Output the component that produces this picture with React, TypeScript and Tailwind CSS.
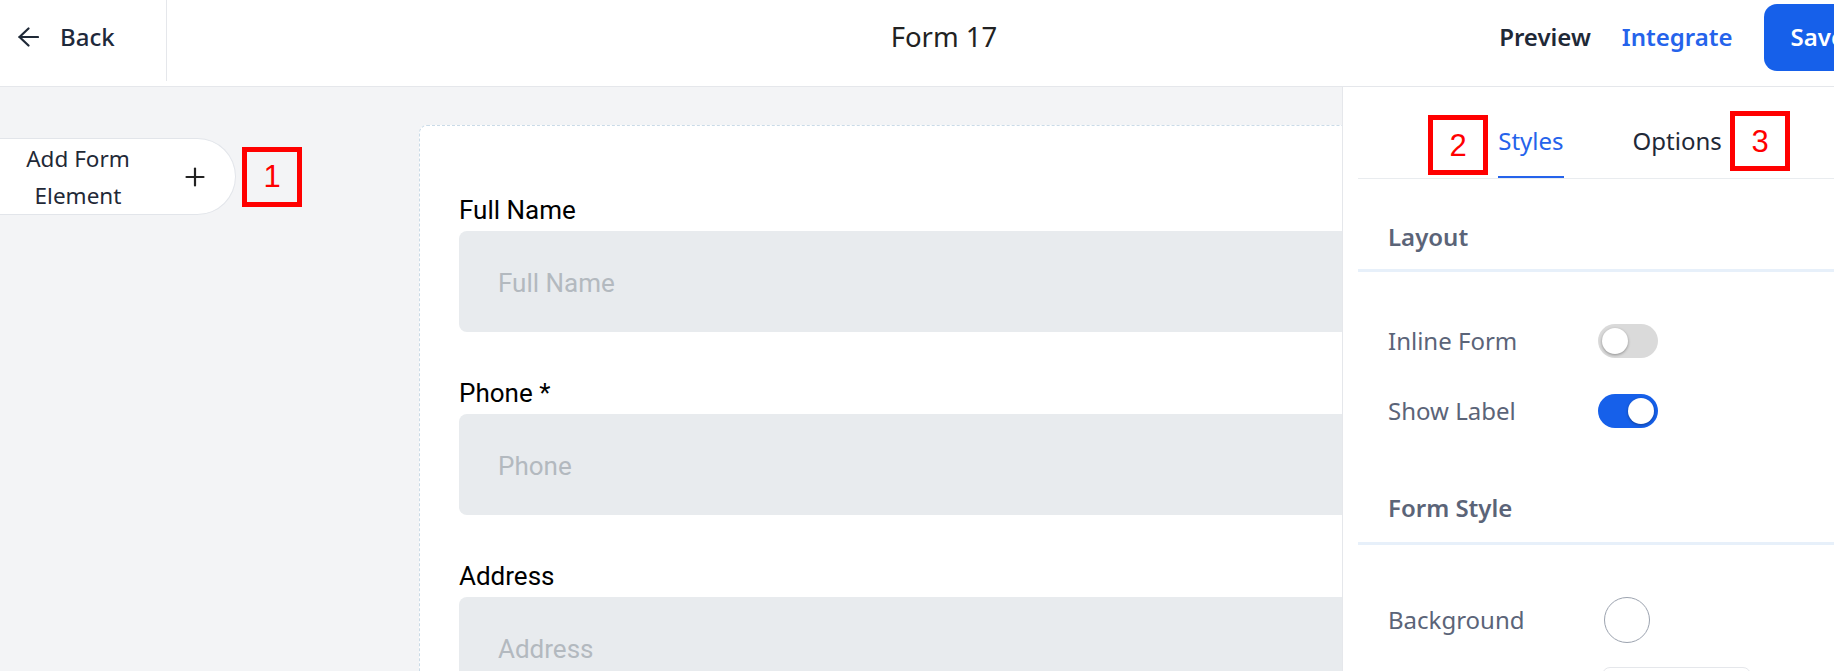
import React from "react";

function Toggle({ on }: { on: boolean }) {
  return (
    <div
      className={
        on
          ? "flex h-[34px] w-[60px] items-center justify-end rounded-full bg-[#1660ea] px-[4px]"
          : "flex h-[34px] w-[60px] items-center justify-start rounded-full bg-[#dadada] px-[4px]"
      }
    >
      <div className="h-[26px] w-[26px] rounded-full bg-white shadow-[0_1px_3px_rgba(0,0,0,0.35)]" />
    </div>
  );
}

function RedBox({ n }: { n: string }) {
  return (
    <div className="flex h-[60px] w-[60px] items-center justify-center border-[5px] border-[#ff0000] font-['Liberation_Sans',Arial,sans-serif] text-[31px] leading-none text-[#ff0000]">
      {n}
    </div>
  );
}

function Field({ label, placeholder }: { label: string; placeholder: string }) {
  return (
    <div className="flex flex-col">
      <label className="mb-[5px] font-['Roboto',sans-serif] text-[26px] leading-[31px] text-black">{label}</label>
      <input
        readOnly
        placeholder={placeholder}
        className="h-[101px] w-full rounded-lg border-0 bg-[#e8ebee] pl-[39px] pt-[3px] font-['Roboto',sans-serif] text-[26px] text-black outline-none placeholder:text-[#b3b9bf]"
      />
    </div>
  );
}

export default function App() {
  return (
    <div className="h-[671px] w-[1834px] overflow-hidden bg-white font-['Noto_Sans',sans-serif]">
      <div className="flex h-full w-[1888px] flex-col">
        {/* Header */}
        <header className="grid h-[87px] shrink-0 grid-cols-[1fr_auto_1fr] items-start border-b border-[#e5e7eb] bg-white">
          <div className="flex">
            <div className="flex h-[81px] w-[167px] items-center border-r border-[#e5e7eb] pb-[7px] pl-[18px]">
              <svg width="21" height="20" viewBox="0 0 21 20" fill="none" stroke="#1f2937" strokeWidth="2.2" strokeLinecap="round" strokeLinejoin="round">
                <path d="M20 10H1.5" />
                <path d="M10.5 1.5L1.5 10L10.5 18.5" />
              </svg>
              <span className="ml-[21px] text-[24px] font-medium leading-none text-[#1e293b]">Back</span>
            </div>
          </div>
          <div className="flex h-[74px] items-center">
            <h1 className="text-[27.5px] font-normal leading-none text-[#222222]">Form 17</h1>
          </div>
          <div className="flex h-[74px] items-center justify-end gap-[31px] pr-[16px]">
            <span className="text-[24px] font-semibold leading-none text-[#1f2937]">Preview</span>
            <span className="text-[24px] font-semibold leading-none text-[#2563eb]">Integrate</span>
            <button className="h-[67px] rounded-[13px] bg-[#1660ea] px-[27px] text-[24px] font-semibold text-white">Save</button>
          </div>
        </header>

        {/* Body */}
        <div className="flex min-h-0 flex-1">
          {/* Canvas */}
          <div className="flex w-[1342px] shrink-0 items-start overflow-hidden bg-[#f3f4f6]">
            <div className="flex w-[419px] shrink-0 items-center pt-[51px]">
              <div className="flex h-[77px] w-[236px] items-center rounded-r-full border border-l-0 border-[#e2e5ea] bg-white pl-[26px]">
                <div className="w-[104px] text-center text-[22.5px] leading-[37px] text-[#1f2937]">
                  Add Form Element
                </div>
                <svg className="ml-[55px]" width="20" height="20" viewBox="0 0 20 20" fill="none" stroke="#222222" strokeWidth="2.2" strokeLinecap="round">
                  <path d="M10 1.5V18.5" />
                  <path d="M1.5 10H18.5" />
                </svg>
              </div>
              <div className="ml-[6px]">
                <RedBox n="1" />
              </div>
            </div>

            <div className="mt-[38px] w-[1100px] shrink-0 rounded-lg border border-dashed border-[#cadbe8] bg-white px-[39px] pb-[40px] pt-[69px]">
              <div className="flex flex-col gap-[46px]">
                <Field label="Full Name" placeholder="Full Name" />
                <Field label="Phone *" placeholder="Phone" />
                <Field label="Address" placeholder="Address" />
              </div>
            </div>
          </div>

          {/* Right panel */}
          <aside className="relative w-[546px] shrink-0 border-l border-[#e5e7eb] bg-white pl-[15px] pr-[16px]">
            <div className="flex h-[92px] items-end justify-center gap-[69px] border-b border-[#e9ecef] pr-[10px]">
              <div className="border-b-2 border-[#2563eb] pb-[19px] text-[24px] leading-[32px] text-[#2563eb]">Styles</div>
              <div className="border-b-2 border-transparent pb-[19px] text-[24px] leading-[32px] text-[#1f2937]">Options</div>
            </div>
            <div className="absolute left-[85px] top-[28px]">
              <RedBox n="2" />
            </div>
            <div className="absolute left-[387px] top-[24px]">
              <RedBox n="3" />
            </div>

            <div className="border-b-[3px] border-[#e7f0fa] pb-[16px] pl-[30px] pt-[42px]">
              <h2 className="text-[24px] font-semibold leading-[32px] text-[#5b6478]">Layout</h2>
            </div>
            <div className="pl-[30px] pt-[34px]">
              <div className="flex h-[70px] items-center">
                <span className="w-[210px] text-[24px] leading-[32px] text-[#5b6478]">Inline Form</span>
                <Toggle on={false} />
              </div>
              <div className="flex h-[70px] items-center">
                <span className="w-[210px] text-[24px] leading-[32px] text-[#5b6478]">Show Label</span>
                <Toggle on={true} />
              </div>
            </div>

            <div className="border-b-[3px] border-[#e7f0fa] pb-[18px] pl-[30px] pt-[46px]">
              <h2 className="text-[24px] font-semibold leading-[32px] text-[#5b6478]">Form Style</h2>
            </div>
            <div className="pl-[30px] pt-[40px]">
              <div className="flex h-[70px] items-center">
                <span className="w-[210px] text-[24px] leading-[32px] text-[#5b6478]">Background</span>
                <div className="ml-[6px] h-[46px] w-[46px] rounded-full border border-[#9ca3af] bg-white" />
              </div>
              <div className="flex h-[70px] items-center">
                <span className="w-[210px] text-[24px] leading-[32px] text-[#5b6478]">Width</span>
                <div className="ml-[4px] h-[46px] w-[149px] rounded-lg border border-[#e5e7eb] bg-white" />
              </div>
            </div>
          </aside>
        </div>
      </div>
    </div>
  );
}
